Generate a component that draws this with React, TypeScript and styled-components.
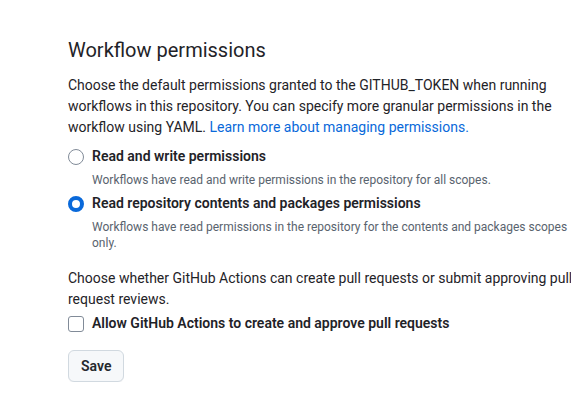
import styled, { createGlobalStyle } from 'styled-components';

const GlobalStyle = createGlobalStyle`
  html, body {
    margin: 0;
    padding: 0;
    background: #ffffff;
    overflow: hidden;
  }
  body {
    font-family: Roboto, "Noto Sans", "Liberation Sans", sans-serif;
    color: #1f2328;
  }
`;

const Page = styled.div`
  width: 517px;
  padding: 35px 0 0 68px;
`;

const Heading = styled.h2`
  margin: 0 0 10px;
  font-size: 20px;
  line-height: 30px;
  font-weight: 400;
  color: #1f2328;
`;

const Text = styled.p<{ $gap?: number }>`
  margin: 0 0 ${ ( p ) => p.$gap ?? 8 }px;
  font-size: 14px;
  line-height: 21px;
`;

const Link = styled.a`
  color: #0969da;
  text-decoration: none;
`;

const Options = styled.div`
  display: flex;
  flex-direction: column;
  gap: 5px;
`;

const Option = styled.label`
  display: grid;
  grid-template-columns: 16px 1fr;
  column-gap: 8px;
  row-gap: 5px;
  align-items: center;
`;

const Radio = styled.span<{ $checked?: boolean }>`
  box-sizing: border-box;
  width: 16px;
  height: 16px;
  border-radius: 50%;
  border: ${ ( p ) => p.$checked ? '4px solid #0969da' : '1px solid #818b98' };
  background: #ffffff;
`;

const Checkbox = styled.span`
  box-sizing: border-box;
  width: 16px;
  height: 16px;
  border-radius: 3px;
  border: 1px solid #818b98;
  background: #ffffff;
`;

const OptionLabel = styled.span`
  font-size: 14px;
  line-height: 21px;
  font-weight: 600;
`;

const Note = styled.span`
  grid-column: 2;
  font-size: 12px;
  line-height: 16px;
  color: #59636e;
`;

const Section = styled.div`
  margin-top: 17px;
`;

const Button = styled.button`
  margin-top: 16px;
  height: 32px;
  padding: 0 12px;
  font-family: inherit;
  font-size: 14px;
  font-weight: 600;
  color: #25292e;
  background: #f6f8fa;
  border: 1px solid #d1d9e0;
  border-radius: 6px;
  box-shadow: 0 1px 0 rgba(31, 35, 40, 0.04);
`;

const App: React.FC = () => {
  return (
    <Page>
      <GlobalStyle />
      <Heading>Workflow permissions</Heading>
      <Text>
        Choose the default permissions granted to the GITHUB_TOKEN when running workflows in this
        repository. You can specify more granular permissions in the workflow using YAML.{ ' ' }
        <Link href="#">Learn more about managing permissions.</Link>
      </Text>
      <Options>
        <Option>
          <Radio />
          <OptionLabel>Read and write permissions</OptionLabel>
          <Note>Workflows have read and write permissions in the repository for all scopes.</Note>
        </Option>
        <Option>
          <Radio $checked />
          <OptionLabel>Read repository contents and packages permissions</OptionLabel>
          <Note>
            Workflows have read permissions in the repository for the contents and packages scopes
            only.
          </Note>
        </Option>
      </Options>
      <Section>
        <Text $gap={ 3 }>
          Choose whether GitHub Actions can create pull requests or submit approving pull request
          reviews.
        </Text>
        <Option>
          <Checkbox />
          <OptionLabel>Allow GitHub Actions to create and approve pull requests</OptionLabel>
        </Option>
      </Section>
      <Button>Save</Button>
    </Page>
  );
};

export default App;
